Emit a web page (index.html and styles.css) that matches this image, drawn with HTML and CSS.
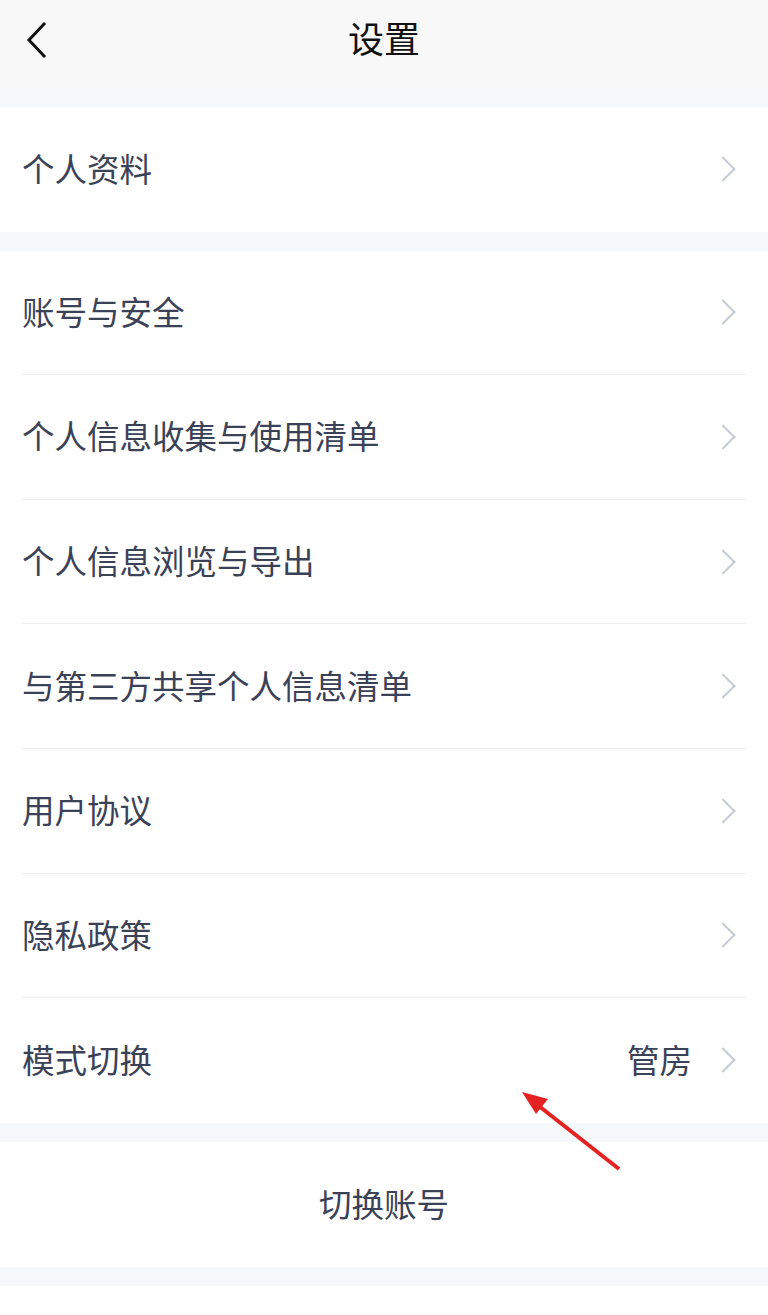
FILE: index.html
```html
<!DOCTYPE html>
<html>
<head>
    <title>设置</title>
    <meta charset="utf-8">
    <link rel="stylesheet" href="styles.css">
</head>
<body>
    <div class="page">
        <div class="header">
            <svg class="back" width="24" height="40" viewBox="0 0 24 40">
                <polyline points="21,3 5,20 21,37" fill="none" stroke="#111" stroke-width="3"/>
            </svg>
            <h1>设置</h1>
        </div>

        <div class="group">
            <div class="row"><span>个人资料</span><span class="arrow"></span></div>
        </div>

        <div class="group">
            <div class="row"><span>账号与安全</span><span class="arrow"></span></div>
            <div class="row"><span>个人信息收集与使用清单</span><span class="arrow"></span></div>
            <div class="row"><span>个人信息浏览与导出</span><span class="arrow"></span></div>
            <div class="row"><span>与第三方共享个人信息清单</span><span class="arrow"></span></div>
            <div class="row"><span>用户协议</span><span class="arrow"></span></div>
            <div class="row"><span>隐私政策</span><span class="arrow"></span></div>
            <div class="row">
                <span>模式切换</span>
                <span class="value">管房</span><span class="arrow"></span>
            </div>
        </div>

        <div class="group">
            <div class="switch">切换账号</div>
        </div>
        <div class="group tail"></div>

        <!-- annotation arrow -->
        <svg class="mark" width="110" height="90" viewBox="0 0 110 90">
            <line x1="103" y1="82" x2="14" y2="12" stroke="#e52222" stroke-width="4"/>
            <polygon points="6,5 32,12 20,27" fill="#e52222"/>
        </svg>
    </div>
</body>
</html>
```

FILE: styles.css
```css
body {
    margin: 0;
    background: #f7f8fc;
    font-family: "Noto Sans CJK SC", "Noto Sans", sans-serif;
}
.page {
    position: relative;
    width: 768px;
    height: 1315px;
    overflow: hidden;
    background: #f7f8fc;
}
.header {
    height: 87px;
    background: #f8f8f8;
    display: flex;
    align-items: center;
    justify-content: center;
    position: relative;
    margin-bottom: 20px;
}
.header h1 {
    margin: 0 0 14px 0;
    font-size: 36px;
    font-weight: normal;
    color: #111;
    line-height: 1;
}
.back {
    position: absolute;
    left: 24px;
    top: 20px;
}
.group {
    background: #fff;
    margin-bottom: 19px;
}
.row {
    box-sizing: border-box;
    height: 124.6px;
    padding-bottom: 4px;
    margin-left: 22px;
    margin-right: 22px;
    display: flex;
    align-items: center;
    border-bottom: 1px solid #eff0f4;
    font-size: 32.5px;
    color: #3b4257;
}
.row:last-child {
    border-bottom: none;
}
.row span:first-child {
    flex: 1;
}
.value {
    margin-right: 22px;
}
.arrow {
    width: 16px;
    height: 16px;
    border-top: 2px solid #c6ccd3;
    border-right: 2px solid #c6ccd3;
    transform: rotate(45deg);
    margin-right: 14px;
    margin-top: 4px;
}
.switch {
    height: 125px;
    padding-bottom: 4px;
    box-sizing: border-box;
    display: flex;
    align-items: center;
    justify-content: center;
    font-size: 32.5px;
    color: #3b4257;
}
.tail {
    height: 40px;
}
.mark {
    position: absolute;
    left: 516px;
    top: 1087px;
}
```
